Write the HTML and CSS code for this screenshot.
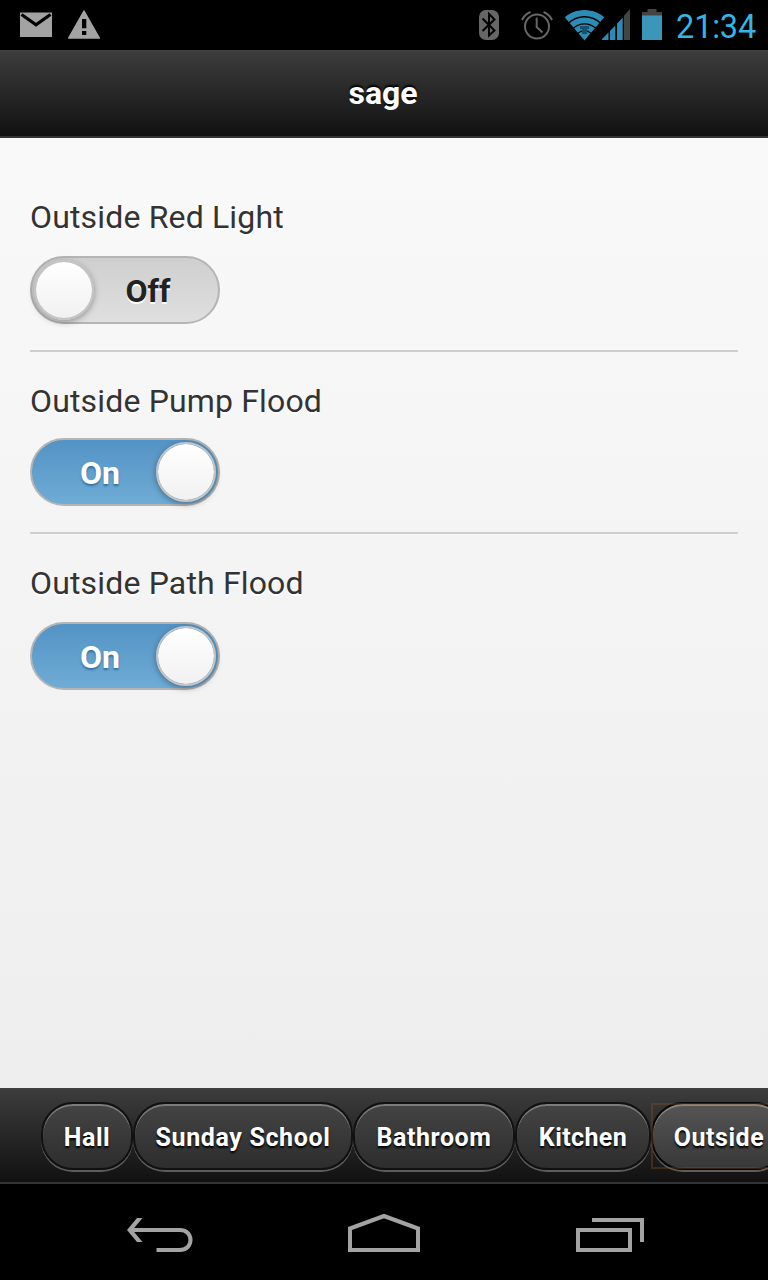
FILE: index.html
```html
<!DOCTYPE html>
<html lang="en">
<head>
<meta charset="utf-8">
<title>sage</title>
<link rel="stylesheet" href="styles.css">
</head>
<body>
<div class="statusbar">
  <svg width="768" height="50" viewBox="0 0 768 50">
    <rect x="20" y="12.5" width="32" height="24.5" fill="#a3a3a3"/>
    <path d="M21.500 14.500L36 24.800l14.500-10.300" fill="none" stroke="#000" stroke-width="3.200"/>
    <path d="M84 11L99.300 38H68.700Z" fill="#a3a3a3" stroke="#a3a3a3" stroke-width="1.500" stroke-linejoin="round"/>
    <path d="M82 19h4.300v9.300H82zM82 31h4.300v4H82z" fill="#000"/>
    <rect x="479" y="10" width="20" height="30" rx="7" fill="#666"/>
    <path d="M482.500 18.500L494.500 30.500L489 35.500V14L494.500 19.500L482.500 31" fill="none" stroke="#000" stroke-width="2"/>
    <g fill="none" stroke="#666" stroke-width="2">
      <circle cx="537" cy="26.500" r="12"/>
      <path d="M536.700 17.500V27L542.500 32.500M522 20Q524.500 14.500 530.500 12M543.500 12Q549.500 14.500 552 20"/>
    </g>
    <clipPath id="wifi"><path d="M584.500 40.500L564.500 17Q567 10 584.500 10T604.500 17Z"/></clipPath>
    <g clip-path="url(#wifi)" fill="none" stroke="#2b8db5">
      <circle cx="584.500" cy="40" r="27" stroke-width="6.200"/>
      <circle cx="584.500" cy="40" r="19.700" stroke-width="5.800"/>
      <circle cx="584.500" cy="40" r="12.700" stroke-width="5.600"/>
      <circle cx="584.500" cy="40" r="4.400" stroke-width="8.800"/>
    </g>
    <path d="M580 26h9v3h-2v5h-5v-5h-2z" fill="#17536c"/>
    <path d="M602 40V39L608.500 32.500V40zM610 40V31L615.300 25.500V40zM617 40V23.800L622.700 17.500V40z" fill="#2b8db5"/>
    <path d="M624 40V15.800L630 9V40z" fill="#444"/>
    <path d="M642 16V12h5.500V9h9v3h5.500v4z" fill="#444"/>
    <rect x="642" y="15.500" width="20" height="24.500" fill="#3c96ba"/>
  </svg>
  <span class="clock">21:34</span>
</div>
<header class="header"><h1 class="title">sage</h1></header>
<main class="content">
  <section class="field field-first">
    <label class="label">Outside Red Light</label>
    <div class="switch switch-off"><span class="knob"></span><span class="state">Off</span></div>
  </section>
  <section class="field field-second">
    <label class="label">Outside Pump Flood</label>
    <div class="switch switch-on"><span class="state">On</span><span class="knob"></span></div>
  </section>
  <section class="field field-third">
    <label class="label">Outside Path Flood</label>
    <div class="switch switch-on"><span class="state">On</span><span class="knob"></span></div>
  </section>
</main>
<footer class="footer">
  <a class="btn btn-hall"><span class="btn-text">Hall</span></a>
  <a class="btn btn-school"><span class="btn-text">Sunday School</span></a>
  <a class="btn btn-bath"><span class="btn-text">Bathroom</span></a>
  <a class="btn btn-kitchen"><span class="btn-text">Kitchen</span></a>
  <div class="focus"><a class="btn btn-outside"><span class="btn-text">Outside</span></a></div>
</footer>
<nav class="navbar">
  <svg width="768" height="96" viewBox="0 1184 768 96" fill="none" stroke="#a3a3a3" stroke-width="4">
    <path d="M130 1230H180C194 1230 194 1250 180 1250H156.500"/>
    <path d="M137 1218H142.500L132.500 1230L142.500 1242H137L127 1230Z" fill="#a3a3a3" stroke="none"/>
    <path d="M350 1250V1228.500L384 1216L418 1228.500V1250Z"/>
    <path d="M578 1230H630V1250H578ZM592 1220H642V1242"/>
  </svg>
</nav>
</body>
</html>
```
FILE: styles.css
```css
* { box-sizing: border-box; }
body {
  margin: 0;
  width: 768px;
  height: 1280px;
  overflow: hidden;
  display: flex;
  flex-direction: column;
  background: #000;
  font-family: Roboto, sans-serif;
}
.statusbar { position: relative; height: 50px; flex: none; }
.statusbar svg, .navbar svg { display: block; }
.clock {
  position: absolute;
  right: 12px;
  top: 7px;
  font-size: 32.5px;
  letter-spacing: -0.2px;
  line-height: 40px;
  color: #33b5e5;
}
.header {
  height: 88px;
  flex: none;
  border-top: 2px solid #404040;
  border-bottom: 2px solid #333;
  background: linear-gradient(#3c3c3c, #111);
  text-align: center;
}
.title {
  margin: 0;
  padding-right: 2px;
  font-size: 32px;
  line-height: 82px;
  color: #fff;
  text-shadow: 0 -2px 2px #000;
}
.content {
  height: 950px;
  flex: none;
  padding: 30px 30px 0;
  background: linear-gradient(#f9f9f9, #eee);
}
.field { display: flex; flex-direction: column; align-items: flex-start; }
.field-first { height: 184px; padding-top: 29px; border-bottom: 2px solid #cfcfcf; }
.field-second { height: 182px; padding-top: 29px; border-bottom: 2px solid #cfcfcf; }
.field-third { padding-top: 29px; }
.label {
  height: 40px;
  line-height: 40px;
  font-size: 32px;
  letter-spacing: 0.16px;
  color: #333;
  text-shadow: 0 2px 0 #fff;
  white-space: nowrap;
}
.switch {
  width: 190px;
  height: 68px;
  flex: none;
  display: flex;
  align-items: center;
  padding: 0 2px;
  border: 2px solid #b5b5b5;
  border-radius: 34px;
  font-size: 32px;
  font-weight: 700;
}
.field-first .switch { margin-top: 19px; }
.field-second .switch { margin-top: 17px; }
.field-third .switch { margin-top: 19px; }
.switch-off { background: linear-gradient(#cfcfcf, #dfdfdf); color: #222; text-shadow: 0 2px 0 #fff; }
.switch-on { background: linear-gradient(#5393c5, #6facd5); color: #fff; text-shadow: 0 2px 2px #3373a5; }
.state { flex: 1; text-align: center; padding-top: 1px; }
.switch-off .state { padding-right: 14px; }
.switch-on .state { padding-left: 10px; }
.knob {
  width: 60px;
  height: 60px;
  flex: none;
  border: 2px solid #c4c4c4;
  border-radius: 50%;
  background: linear-gradient(#fff, #f1f1f1);
  background-clip: padding-box;
  box-shadow: 0 2px 6px rgba(0, 0, 0, .35);
}
.footer {
  height: 96px;
  flex: none;
  display: flex;
  overflow: hidden;
  padding: 12px 0 0 41px;
  border-top: 2px solid #404040;
  border-bottom: 2px solid #333;
  background: linear-gradient(#3c3c3c, #111);
}
.btn {
  height: 68px;
  flex: none;
  display: flex;
  align-items: center;
  justify-content: center;
  border: 2px solid #111;
  border-radius: 32px;
  background: linear-gradient(#444, #2d2d2d);
  box-shadow: 0 2px 0 rgba(255, 255, 255, .3), inset 0 2px 0 rgba(255, 255, 255, .3);
  color: #fff;
  font-size: 25px;
  font-weight: 700;
  letter-spacing: 0.55px;
  text-shadow: 0 2px 2px #000;
  white-space: nowrap;
}
.btn-text { padding-top: 2px; }
.btn-hall { width: 92px; }
.btn-school { width: 220px; letter-spacing: 0.64px; }
.btn-bath { width: 162px; }
.btn-kitchen { width: 136px; letter-spacing: 0.4px; }
.focus { position: relative; width: 136px; height: 68px; flex: none; }
.focus::after {
  content: "";
  position: absolute;
  inset: 1px 0 1px 0;
  border: 2px solid rgba(140, 85, 40, .32);
}
.btn-outside { width: 136px; background: linear-gradient(#555, #383838); border-color: #080808; }
.navbar { height: 96px; flex: none; }
```
